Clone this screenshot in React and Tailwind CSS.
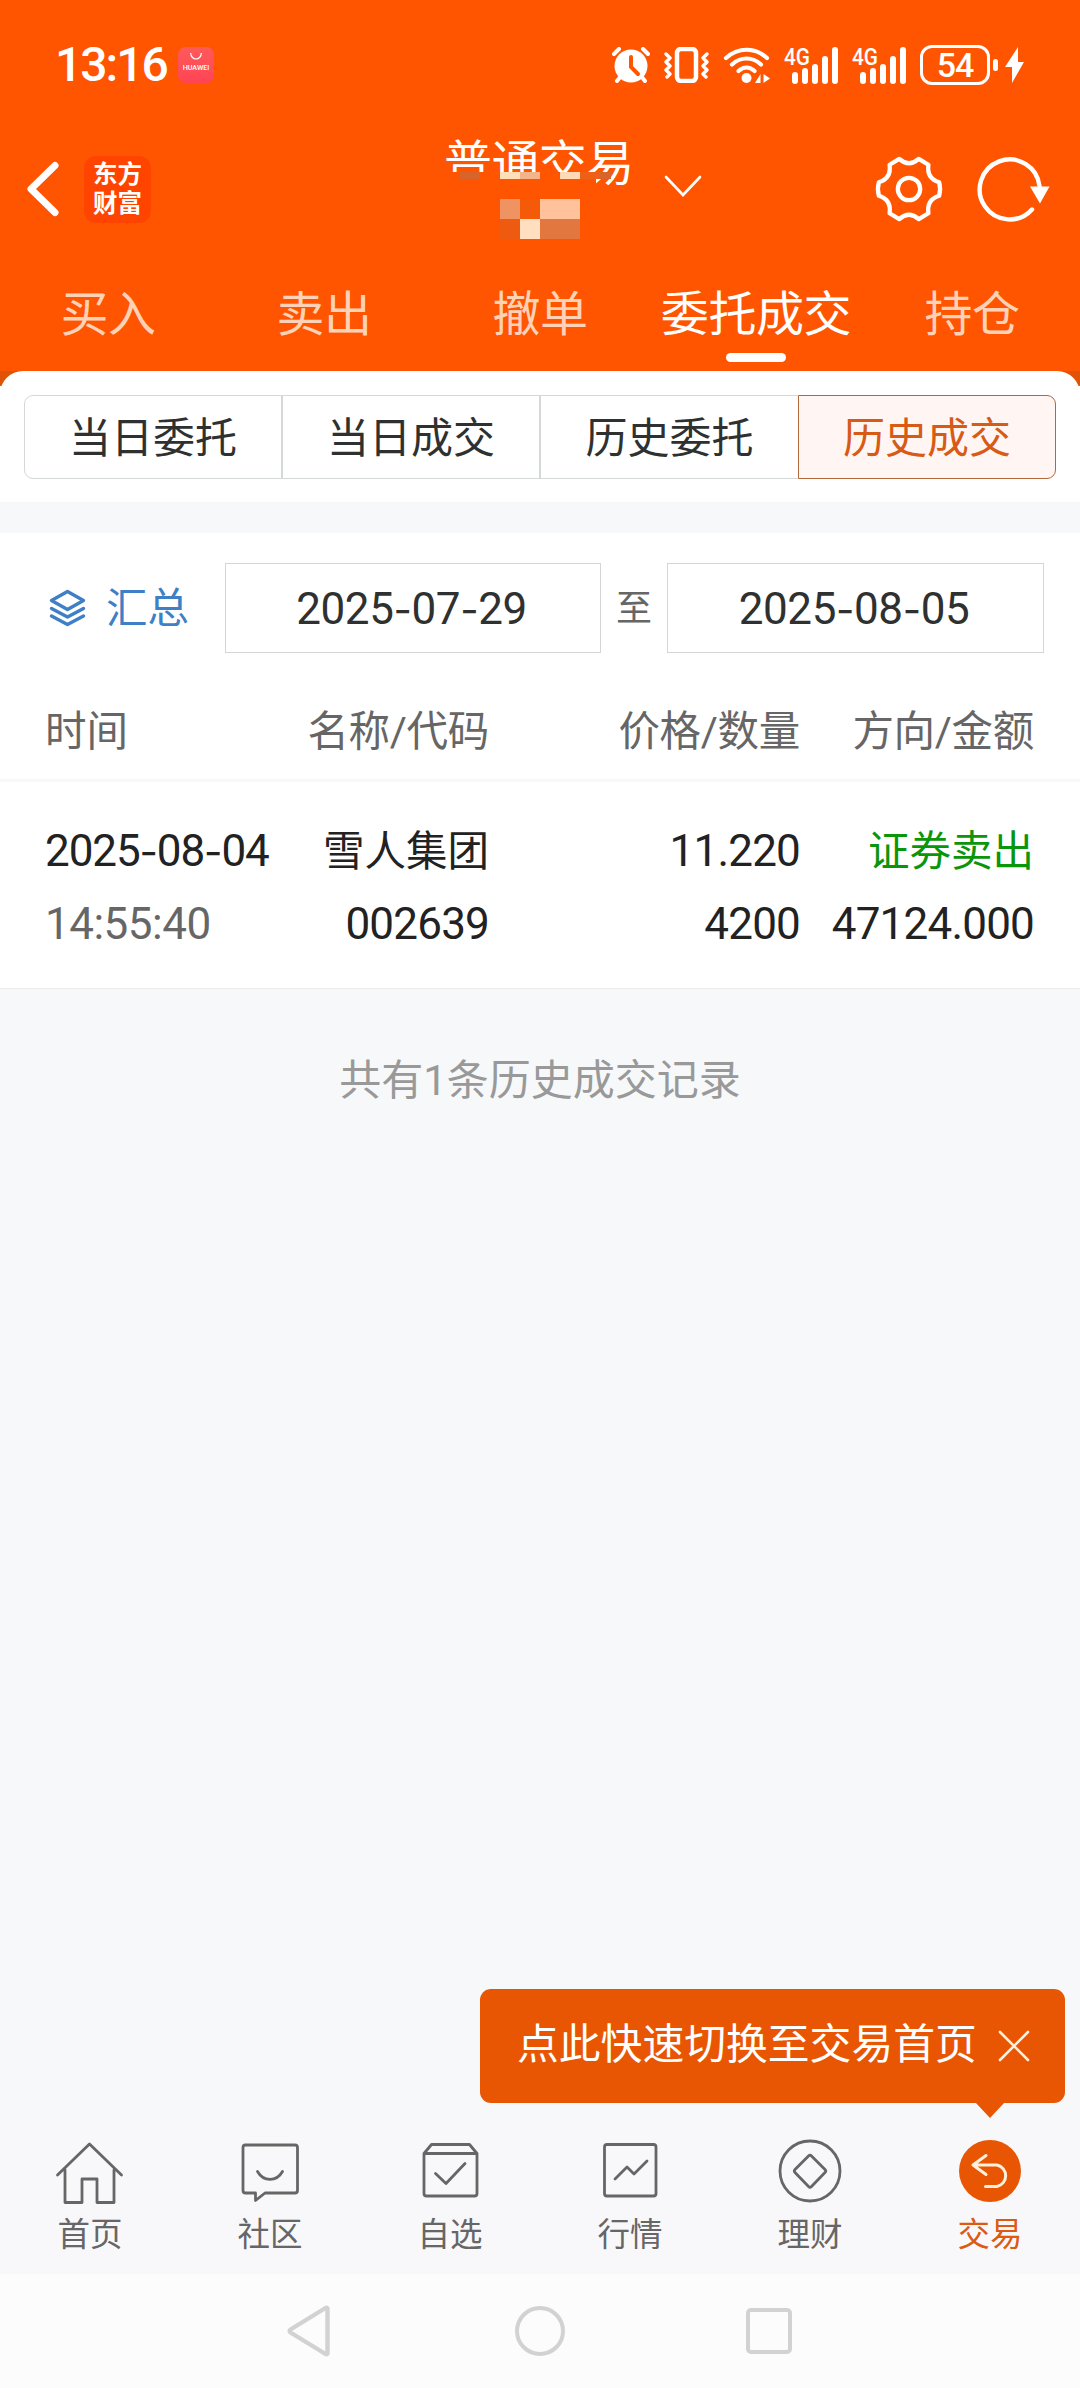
import React from "react";

const FONT = "font-['Roboto','Noto_Sans_CJK_SC',sans-serif]";

function Num({ children, className = "tracking-[-0.4px]" }) {
  return (
    <span className={`text-[44px] ${className}`}>
      {children.split("-").map((part, i) => (
        <React.Fragment key={i}>
          {i > 0 && <span className="font-['Inter'] text-[40px]">-</span>}
          {part}
        </React.Fragment>
      ))}
    </span>
  );
}

function Signal() {
  return (
    <svg className="h-10 w-[54px] overflow-visible" viewBox="0 0 54 40" fill="#fff">
      <text x="0" y="20" fontSize="24" fontWeight="500" fontFamily="Roboto" textLength="26" lengthAdjust="spacingAndGlyphs">4G</text>
      <rect x="8" y="27" width="6" height="12" rx="3" />
      <rect x="18" y="23" width="6" height="16" rx="3" />
      <rect x="28" y="19" width="6" height="20" rx="3" />
      <rect x="38" y="11" width="6" height="28" rx="3" />
      <rect x="48" y="2" width="6" height="37" rx="3" />
    </svg>
  );
}

function StatusBar() {
  return (
    <div className="flex h-[128px] items-center pt-0.5 pr-[55px] pl-[55px] text-white">
      <span className="w-[123px] text-[48px] leading-[60px] font-medium tracking-[-2px]">13:16</span>
      <div className="flex h-9 w-9 flex-col items-center rounded-lg bg-gradient-to-b from-[#ff5a5a] to-[#ff4455]">
        <svg className="mt-1.5 h-2 w-3" viewBox="0 0 12 8" fill="none" stroke="#fff" strokeWidth="1.2">
          <path d="M.7 0a5.3 6 0 0 0 10.6 0" />
        </svg>
        <span className="text-[7.2px] leading-[14px] font-medium">HUAWEI</span>
      </div>
      <div className="ml-auto flex items-center">
        <svg className="h-9 w-[38px]" viewBox="0 0 38 36">
          <g stroke="#fff" strokeLinecap="round" fill="none">
            <path d="M2 7l5-5M36 7l-5-5M5 34l4-5M33 34l-4-5" strokeWidth="4" />
          </g>
          <circle cx="19" cy="19" r="16.5" fill="#fff" />
          <path d="M19 10v10l7 7" fill="none" stroke="#ff5500" strokeWidth="4" strokeLinecap="round" />
        </svg>
        <svg className="ml-3.5 h-9 w-[45px]" viewBox="0 0 45 36" fill="none" stroke="#fff">
          <rect x="13" y="2" width="19" height="32" rx="4" strokeWidth="4.5" />
          <path d="M2 7l4 4-4 4 4 4-4 4 4 4-3 3M43 7l-4 4 4 4-4 4 4 4-4 4 3 3" strokeWidth="3.4" strokeLinecap="round" strokeLinejoin="round" />
        </svg>
        <svg className="ml-3.5 h-9 w-12" viewBox="0 0 48 36" fill="none" stroke="#fff" strokeWidth="4.2" strokeLinecap="round">
          <path d="M3 11c12-11 29-11 41 0M9 17.5c8.5-8 20.5-8 29 0M15.5 24c5-4.500 11-4.500 16 0" />
          <circle cx="23.500" cy="31" r="5" fill="#fff" stroke="none" />
          <path d="M37.500 27v9h-5.500zM40.500 27l6.500 4.500-6.500 4.500z" fill="#fff" stroke="none" />
        </svg>
        <div className="ml-[13px] flex gap-3.5">
          <Signal />
          <Signal />
        </div>
        <div className="ml-3.5 flex h-10 w-[70px] items-center justify-center rounded-[12px] border-[3px] border-white text-[34px] leading-none font-medium tracking-[-1px]">54</div>
        <div className="ml-[3px] h-3 w-[5px] rounded-sm bg-white" />
        <svg className="ml-[7px] h-9 w-5" viewBox="0 0 20 36" fill="#fff">
          <path d="M13 0L0 20h7L7 36 19 15h-6z" />
        </svg>
      </div>
    </div>
  );
}

function TitleBar() {
  return (
    <div className="flex h-[122px] items-center">
      <svg className="ml-[26px] h-14 w-[33px]" viewBox="0 0 33 56" fill="none" stroke="#fff" strokeWidth="7" strokeLinecap="round" strokeLinejoin="round">
        <path d="M29 4.500L5 28l24 23.500" />
      </svg>
      <div className="ml-[25px] flex h-[67px] w-[67px] flex-col items-center justify-center rounded-xl bg-[#ff4400] text-[24.500px] leading-[29px] font-bold text-white">
        <span>东方</span>
        <span>财富</span>
      </div>
      <div className="relative ml-[293px] h-[122px] w-[190px]">
        <div className="pt-1 text-[48px] leading-[64px] tracking-[-0.6px] whitespace-nowrap text-white">普通交易</div>
        {/* Mosaic over the account name */}
        <div className="absolute top-[44px] left-0 grid h-[20px] w-[152px] grid-rows-[7px_13px] bg-[#ff5500]">
          <div className="flex">
            <i className="ml-[16px] w-5 bg-[#d9642b]" />
            <i className="ml-5 w-5 bg-[#ffdfb8]" />
            <i className="w-5 bg-[#f3b48c]" />
            <i className="ml-5 w-5 bg-[#ffd9b5]" />
            <i className="w-5 bg-[#ee5f18]" />
            <i className="w-[11px] bg-[#d9642b]" />
          </div>
        </div>
        <div className="absolute top-[71px] left-[56px] grid grid-cols-4 grid-rows-2">
          <i className="h-5 w-5 bg-[#ef9363]" />
          <i className="h-5 w-5 bg-[#f55a08]" />
          <i className="h-5 w-5 bg-[#ffc29a]" />
          <i className="h-5 w-5 bg-[#ffc29a]" />
          <i className="h-5 w-5 bg-[#ee5a10]" />
          <i className="h-5 w-5 bg-[#ffdfbf]" />
          <i className="h-5 w-5 bg-[#e27840]" />
          <i className="h-5 w-5 bg-[#e27840]" />
        </div>
      </div>
      <svg className="mb-1 ml-[30px] h-6 w-[38px]" viewBox="0 0 38 24" fill="none" stroke="#fff" strokeWidth="2.600" strokeLinecap="round">
        <path d="M2 2l17 18L36 2" />
      </svg>
      <svg className="ml-[172px] h-[68px] w-[70px]" viewBox="-36 -35 72 70" fill="none" stroke="#fff" strokeWidth="4.400" strokeLinejoin="round">
        <path d="M-10-31Q0-22 10-31L20-25Q18-11 31-7Q33 0 31 7Q18 11 20 25L10 31Q0 22-10 31L-20 25Q-18 11-31 7Q-33 0-31-7Q-18-11-20-25Z" />
        <circle r="11.500" />
      </svg>
      <svg className="ml-[31px] h-[68px] w-[76px]" viewBox="-35 -34 76 68" fill="none" stroke="#fff" strokeWidth="4.400" strokeLinecap="round">
        <path d="M29.500-3A30 30 0 1 0 22 20.500" />
        <path d="M20-2.500h19.500l-9.500 17z" fill="#fff" stroke="none" />
      </svg>
    </div>
  );
}

function Tabs() {
  const tabs = ["买入", "卖出", "撤单", "委托成交", "持仓"];
  return (
    <div className="grid h-[121px] grid-cols-5">
      {tabs.map((t, i) => (
        <div key={t} className={`flex flex-col items-center pt-[33px] text-[48px] leading-[64px] tracking-[-0.4px] ${i === 3 ? "text-white" : "text-[#ffd2b8]"}`}>
          <span>{t}</span>
          {i === 3 && <span className="mt-1.5 h-[9px] w-[60px] rounded-full bg-white" />}
        </div>
      ))}
    </div>
  );
}

function Segments() {
  return (
    <div className="grid h-[84px] grid-cols-4 text-[42px] text-[#2f3131]">
      <div className="flex items-center justify-center rounded-l-[9px] border border-[#d4d8d8] pt-[3px]">当日委托</div>
      <div className="flex items-center justify-center border border-[#d4d8d8] pt-[3px]">当日成交</div>
      <div className="flex items-center justify-center border border-r-0 border-[#d4d8d8] pt-[3px]">历史委托</div>
      <div className="flex items-center justify-center rounded-r-[9px] border border-[#b3683c] bg-[#fff6f3] pt-[3px] text-[#d75a16]">历史成交</div>
    </div>
  );
}

function DateRow() {
  return (
    <div className="flex h-[90px] items-center">
      <svg className="ml-[49px] h-[38px] w-[37px]" viewBox="0 0 37 38" fill="none" stroke="#3f7fc6" strokeWidth="3.400" strokeLinecap="round" strokeLinejoin="round">
        <path d="M18.500 2.500L34.500 11.500 18.500 20.500 2.500 11.500zM2.500 19.500l16 8.500 16-8.500M2.500 27l16 8.500 16-8.500" />
      </svg>
      <span className="ml-5 w-[119px] pt-0.5 text-[41.500px] text-[#3f7fc6]">汇总</span>
      <div className="flex h-[90px] w-[376px] items-center justify-center border border-[#d4d6d6] pt-0.5 pr-[3px]">
        <Num>2025-07-29</Num>
      </div>
      <span className="w-[66px] pt-0.5 text-center text-[36px] text-[#666]">至</span>
      <div className="flex h-[90px] w-[377px] items-center justify-center border border-[#d4d6d6] pt-0.5 pr-[3px]">
        <Num>2025-08-05</Num>
      </div>
    </div>
  );
}

const COLS = "grid grid-cols-[244px_200px_311px_234px] pl-[45px] text-[41.5px]";

function Trades() {
  return (
    <>
      <div className={`${COLS} mt-[47px] h-[79px] items-start leading-[64px] text-[#666]`}>
        <span>时间</span>
        <span className="text-right tracking-[-0.3px]">名称/代码</span>
        <span className="text-right tracking-[-0.3px]">价格/数量</span>
        <span className="text-right tracking-[-0.3px]">方向/金额</span>
      </div>
      <div className="h-[3px] bg-[#f7f8f9]" />
      <div className={`${COLS} h-[207px] content-start gap-y-2 border-b border-[#ececec] pt-[37px] leading-[64px] text-[#222]`}>
        <Num className="tracking-[-1.1px]">2025-08-04</Num>
        <span className="pt-px text-right">雪人集团</span>
        <Num className="text-right tracking-[-0.8px]">11.220</Num>
        <span className="pt-px text-right text-[#0b950b]">证券卖出</span>
        <Num className="tracking-[-0.5px] text-[#666]">14:55:40</Num>
        <Num className="text-right tracking-[-0.8px]">002639</Num>
        <Num className="text-right tracking-[-0.8px]">4200</Num>
        <Num className="text-right tracking-[-0.8px]">47124.000</Num>
      </div>
    </>
  );
}

const NAV = [
  ["首页", <path d="M3 32L35 1 67 32M10.500 27v32.500h17V36h15v23.500h17V27" transform="translate(-.5 2)" />],
  ["社区", <><path d="M17.500 4h50q2.500 0 2.500 2.500v43q0 2.500-2.500 2.500h-30l-9.500 7.500v-7.500h-10q-2.500 0-2.500-2.500v-43q0-2.500 2.500-2.500z" transform="translate(-7.500 0)" /><path d="M22.500 30.500c6 10.500 19 10.500 25 0" /></>],
  ["自选", <><path d="M9 12.500L16.500 3.500h38l7.500 9v40q0 2.500-2.500 2.500h-48q-2.500 0-2.500-2.500zM9 12.500h53" /><path d="M20.500 32.500l10.500 10 19-20" /></>],
  ["行情", <><rect x="9.500" y="3.500" width="51.500" height="51.500" rx="2.500" /><path d="M20 38l12-12 7 7L52 20" /></>],
  ["理财", <><circle cx="35" cy="30" r="30" /><path d="M33.500 15q1.500-1.500 3 0l13.500 13.500q1.500 1.500 0 3L36.500 45.500q-1.500 1.500-3 0L20 31.500q-1.500-1.500 0-3z" /></>],
  ["交易", <><circle cx="35" cy="30" r="31" fill="#e95603" stroke="none" /><path d="M31 14.500L18 24l13 9.500M18 24h24a11 11 0 0 1 0 21.500H30.500" stroke="#fff0dc" strokeWidth="3" /></>],
];

function BottomNav() {
  return (
    <div className="grid h-[156px] grid-cols-6 bg-[#f8f8fb]">
      {NAV.map(([label, icon], i) => (
        <div key={label} className={`flex flex-col items-center pt-[20px] text-[32.500px] ${i === 5 ? "text-[#dc5a12]" : "text-[#666]"}`}>
          <svg className="h-[66px] w-[70px]" viewBox="0 -3 70 66" fill="none" stroke="#666" strokeWidth="2.800" strokeLinejoin="round" strokeLinecap="round">{icon}</svg>
          <span className="mt-[6px] leading-[50px]">{label}</span>
        </div>
      ))}
    </div>
  );
}

export default function App() {
  return (
    <div className={`${FONT} flex h-[2388px] w-[1080px] flex-col overflow-hidden bg-[#f6f8fa] text-[#2f3131]`}>
      <div className="bg-[#ff5500]">
        <StatusBar />
        <TitleBar />
        <Tabs />
      </div>
      <div className="h-[15px] overflow-hidden bg-[#e05206]">
        <div className="h-10 rounded-t-[23px] bg-white" />
      </div>
      <div className="h-[116px] bg-white px-6 pt-[9px]">
        <Segments />
      </div>
      <div className="mt-[31px] bg-white pt-[30px]">
        <DateRow />
        <Trades />
      </div>
      <div className="mt-[60px] text-center text-[42px] leading-[64px] text-[#999]">共有1条历史成交记录</div>
      <div className="relative mt-auto">
        <div className="absolute right-[15px] bottom-[171px] flex h-[114px] w-[585px] items-center rounded-[11px] bg-[#e95603] pl-[37px] text-[41.800px] text-white">
          <span className="w-[460px] pb-0.5 whitespace-nowrap">点此快速切换至交易首页</span>
          <svg className="ml-[21px] h-8 w-8" viewBox="0 0 32 32" fill="none" stroke="#fff0dc" strokeWidth="2.600" strokeLinecap="round">
            <path d="M2 2l28 28M30 2L2 30" />
          </svg>
          <svg className="absolute top-[113px] right-[60px] h-[16px] w-[30px]" viewBox="0 0 30 16" fill="#e95603">
            <path d="M0 0h30L15 16z" />
          </svg>
        </div>
        <BottomNav />
      </div>
      <div className="flex h-[114px] shrink-0 items-center bg-[#fcfcfc]">
        <svg className="ml-[285px] h-[54px] w-12" viewBox="0 0 48 54" fill="none" stroke="#d2d2d2" strokeWidth="4.400" strokeLinejoin="round">
          <path d="M42.500 4.500v45q-.5 1-2 .500L5.500 28.500q-1.500-1.500 0-3L40.500 4q1.500-.5 2 .5z" />
        </svg>
        <div className="ml-[182px] h-[50px] w-[50px] rounded-full border-[4.500px] border-[#d2d2d2]" />
        <div className="ml-[181px] h-[46px] w-[46px] rounded-[5px] border-[4.500px] border-[#d2d2d2]" />
      </div>
    </div>
  );
}
